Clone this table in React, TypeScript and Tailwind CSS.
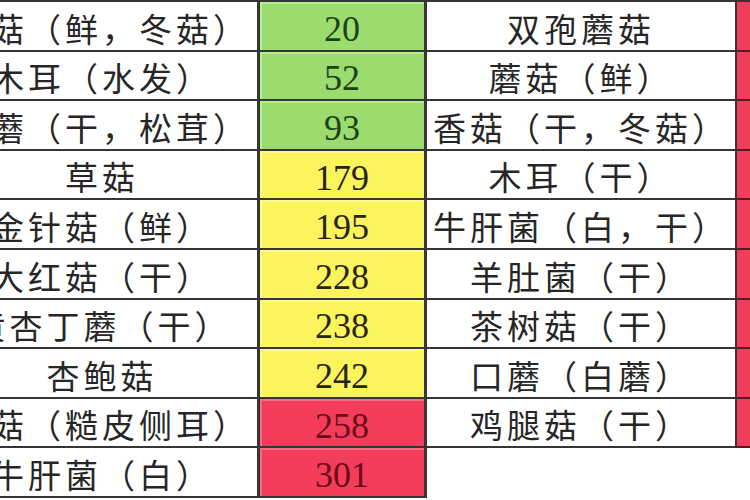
import React from "react";

type Row = { left: string; value: string; level: "low" | "mid" | "high"; right?: string };

const rows: Row[] = [
  { left: "香菇（鲜，冬菇）", value: "20", level: "low", right: "双孢蘑菇" },
  { left: "木耳（水发）", value: "52", level: "low", right: "蘑菇（鲜）" },
  { left: "松蘑（干，松茸）", value: "93", level: "low", right: "香菇（干，冬菇）" },
  { left: "草菇", value: "179", level: "mid", right: "木耳（干）" },
  { left: "金针菇（鲜）", value: "195", level: "mid", right: "牛肝菌（白，干）" },
  { left: "大红菇（干）", value: "228", level: "mid", right: "羊肚菌（干）" },
  { left: "黄杏丁蘑（干）", value: "238", level: "mid", right: "茶树菇（干）" },
  { left: "杏鲍菇", value: "242", level: "mid", right: "口蘑（白蘑）" },
  { left: "平菇（糙皮侧耳）", value: "258", level: "high", right: "鸡腿菇（干）" },
  { left: "牛肝菌（白）", value: "301", level: "high" },
];

const levelCls = {
  low: "bg-[#9cdc6e] text-[#1a4418] shadow-[inset_1px_1px_0_1px_#b8ee92]",
  mid: "bg-[#fbf45c] text-[#26251a] shadow-[inset_1px_1px_0_1px_#fdf98e]",
  high: "bg-[#f43d5b] text-[#6a0a1b] shadow-[inset_1px_1px_0_1px_#f76b83]",
};

const cjk = { fontFamily: '"Noto Sans CJK SC", "Noto Sans", sans-serif' };
const serif = { fontFamily: '"Liberation Serif", "Noto Sans CJK SC", serif' };

export default function App() {
  return (
    <div className="relative w-[750px] h-[500px] overflow-hidden bg-white">
      <div className="ml-[-53px] w-[820px] border-t-2 border-[#363636]">
        {rows.map((r, i) => (
          <div key={i} className="flex h-[49.6px]">
            <div
              className="w-[310px] flex items-center justify-center pt-[5px] border-b-2 border-[#363636] text-[33px] tracking-[4px] text-[#262626] whitespace-nowrap"
              style={cjk}
            >
              {r.left}
            </div>
            <div
              className={`w-[170px] flex items-center justify-center pt-[6px] border-x-[3px] border-b-2 border-[#363636] text-[36px] ${levelCls[r.level]}`}
              style={serif}
            >
              {r.value}
            </div>
            {r.right ? (
              <>
                <div
                  className="w-[310px] flex items-center justify-center pt-[5px] border-b-2 border-r-2 border-[#363636] text-[33px] tracking-[4px] text-[#262626] whitespace-nowrap"
                  style={cjk}
                >
                  {r.right}
                </div>
                <div className="w-[30px] bg-[#f43d5b] border-b-2 border-[#5a1a24]" />
              </>
            ) : (
              <div className="w-[340px] bg-white" />
            )}
          </div>
        ))}
      </div>
    </div>
  );
}
